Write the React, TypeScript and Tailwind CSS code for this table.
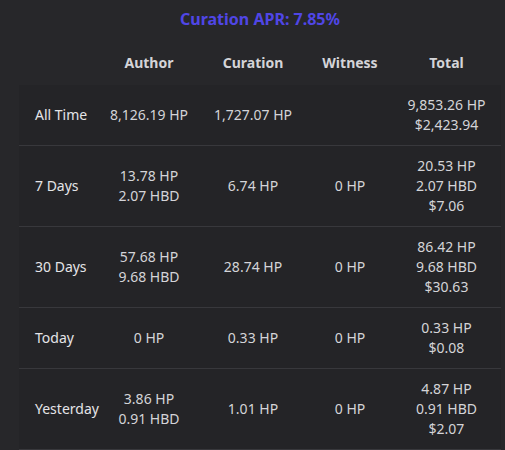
const rows = [
  { label: "All Time", author: ["8,126.19 HP"], curation: ["1,727.07 HP"], witness: [], total: ["9,853.26 HP", "$2,423.94"] },
  { label: "7 Days", author: ["13.78 HP", "2.07 HBD"], curation: ["6.74 HP"], witness: ["0 HP"], total: ["20.53 HP", "2.07 HBD", "$7.06"] },
  { label: "30 Days", author: ["57.68 HP", "9.68 HBD"], curation: ["28.74 HP"], witness: ["0 HP"], total: ["86.42 HP", "9.68 HBD", "$30.63"] },
  { label: "Today", author: ["0 HP"], curation: ["0.33 HP"], witness: ["0 HP"], total: ["0.33 HP", "$0.08"] },
  { label: "Yesterday", author: ["3.86 HP", "0.91 HBD"], curation: ["1.01 HP"], witness: ["0 HP"], total: ["4.87 HP", "0.91 HBD", "$2.07"] },
];

const Cell = ({ lines }: { lines: string[] }) => (
  <td className="px-1 py-[10px] text-center">
    {lines.map((l, i) => (
      <div key={i}>{l}</div>
    ))}
  </td>
);

const App = () => {
  return (
    <div
      className="h-[450px] w-[505px] overflow-hidden bg-[#27272a] text-[14px] leading-5 text-[#d4d4d8]"
      style={{ fontFamily: '"Noto Sans", "Open Sans", sans-serif' }}
    >
      <div className="ml-[19px] w-[482px]">
        <h2 className="pt-[8px] text-center text-[16px] font-bold leading-[22px] text-[#5046e6]">
          Curation APR: 7.85%
        </h2>
        <table className="mt-[10px] w-full table-fixed border-collapse">
          <colgroup>
            <col className="w-[81px]" />
            <col className="w-[98px]" />
            <col className="w-[110px]" />
            <col className="w-[84px]" />
            <col className="w-[109px]" />
          </colgroup>
          <thead>
            <tr className="h-[45px]">
              <th></th>
              <th className="font-bold">Author</th>
              <th className="font-bold">Curation</th>
              <th className="font-bold">Witness</th>
              <th className="font-bold">Total</th>
            </tr>
          </thead>
          <tbody className="bg-[#242427]">
            {rows.map((r) => (
              <tr key={r.label} className="border-b border-[#38383c]">
                <td className="py-[10px] pl-4 text-left text-[#e4e4e7]">{r.label}</td>
                <Cell lines={r.author} />
                <Cell lines={r.curation} />
                <Cell lines={r.witness} />
                <Cell lines={r.total} />
              </tr>
            ))}
          </tbody>
        </table>
      </div>
    </div>
  );
};

export default App;
